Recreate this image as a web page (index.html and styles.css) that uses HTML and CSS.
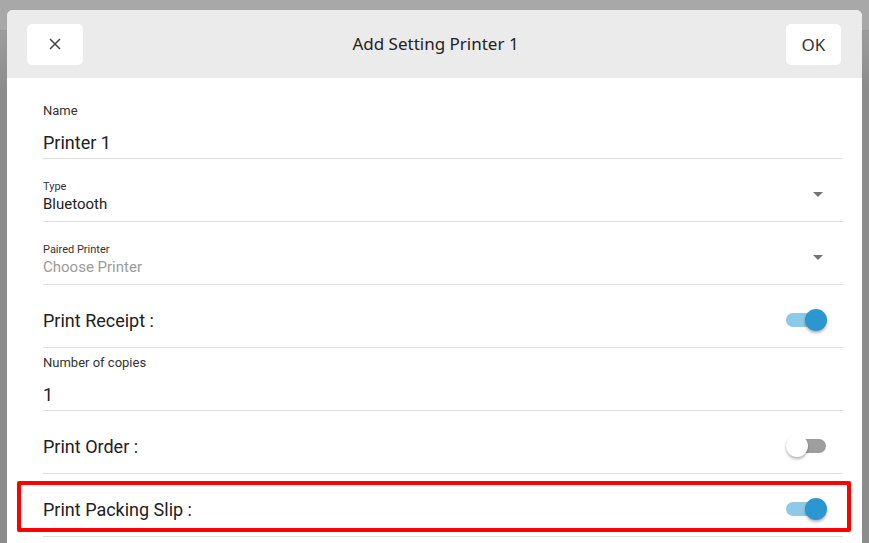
FILE: index.html
```html
<!DOCTYPE html>
<html lang="en">
<head>
  <meta charset="UTF-8" />
  <meta name="viewport" content="width=device-width, initial-scale=1.0" />
  <title>Add Setting Printer 1</title>
  <link rel="stylesheet" href="styles.css">
</head>
<body>
  <div class="modal">
    <header class="modal-head">
      <button class="head-btn close-btn" aria-label="Close">
        <svg width="14" height="14" viewBox="0 0 14 14"><path d="M2 2 L12 12 M12 2 L2 12" stroke="#444" stroke-width="1.5" fill="none"/></svg>
      </button>
      <h1 class="title">Add Setting Printer 1</h1>
      <button class="head-btn ok-btn">OK</button>
    </header>

    <div class="form">
      <div class="field field-name">
        <label>Name</label>
        <div class="value big">Printer 1</div>
      </div>

      <div class="field field-select">
        <div class="select-text">
          <label class="small">Type</label>
          <div class="value">Bluetooth</div>
        </div>
        <span class="arrow"></span>
      </div>

      <div class="field field-select">
        <div class="select-text">
          <label class="small">Paired Printer</label>
          <div class="value placeholder">Choose Printer</div>
        </div>
        <span class="arrow"></span>
      </div>

      <div class="field field-toggle">
        <span class="toggle-label">Print Receipt :</span>
        <span class="switch on"><span class="knob"></span></span>
      </div>

      <div class="field field-copies">
        <label>Number of copies</label>
        <div class="value big">1</div>
      </div>

      <div class="field field-toggle">
        <span class="toggle-label">Print Order :</span>
        <span class="switch"><span class="knob"></span></span>
      </div>

      <div class="field field-toggle marked">
        <span class="toggle-label">Print Packing Slip :</span>
        <span class="switch on"><span class="knob"></span></span>
        <span class="highlight"></span>
      </div>
    </div>
  </div>
</body>
</html>
```

FILE: styles.css
```css
*{
    padding: 0;
    margin: 0;
    box-sizing: border-box;
}
body{
    height: 543px;
    overflow: hidden;
    font-family: Roboto, "Liberation Sans", sans-serif;
    background: linear-gradient(to bottom, #a8a8a8 0, #a8a8a8 30px, #969696 30px, #969696 31px, #9c9c9c 31px, #8c8c8c 90px, #8c8c8c 100%);
}
.modal{
    margin: 10px 7px 0;
    background-color: white;
    border-radius: 6px 6px 0 0;
    height: 560px;
    overflow: hidden;
}
.modal-head{
    display: flex;
    align-items: center;
    justify-content: space-between;
    height: 68px;
    padding: 0 21px 0 20px;
    background-color: #ecebec;
}
.head-btn{
    height: 41px;
    border: none;
    border-radius: 5px;
    background-color: white;
    display: flex;
    align-items: center;
    justify-content: center;
    font-family: "Noto Sans", "Open Sans", sans-serif;
    font-size: 17px;
    color: #333;
}
.close-btn{
    width: 56px;
}
.ok-btn{
    width: 55px;
}
.title{
    font-family: "Noto Sans", "Open Sans", sans-serif;
    font-size: 17px;
    font-weight: 400;
    color: #222;
    margin: -2px 0 0 2px;
}
.form{
    padding: 0 19px 0 36px;
}
.field{
    border-bottom: 1px solid #e0e0e0;
    color: #212121;
}
.field label{
    display: block;
    font-size: 13px;
    line-height: 16px;
    color: #333;
}
.field label.small{
    font-size: 11px;
    line-height: 14px;
}
.value{
    font-size: 15px;
    line-height: 20px;
}
.value.big{
    font-size: 18px;
    line-height: 24px;
}
.placeholder{
    color: #9a9a9a;
}
.field-name{
    height: 81px;
    padding-top: 25px;
}
.field-name .value{
    margin-top: 12px;
}
.field-select{
    height: 63px;
    display: flex;
    align-items: center;
    justify-content: space-between;
    padding-top: 21px;
}
.select-text{
    align-self: flex-start;
}
.arrow{
    width: 0;
    height: 0;
    border-left: 5px solid transparent;
    border-right: 5px solid transparent;
    border-top: 5px solid #757575;
    margin: -13px 20px 0 0;
}
.field-toggle{
    height: 63px;
    display: flex;
    align-items: center;
    justify-content: space-between;
    padding-top: 8px;
    position: relative;
}
.toggle-label{
    font-size: 18px;
}
.switch{
    position: relative;
    width: 40px;
    height: 14px;
    border-radius: 7px;
    background-color: #9e9e9e;
    margin-right: 17px;
}
.switch .knob{
    position: absolute;
    top: -4px;
    left: 0;
    width: 22px;
    height: 22px;
    border-radius: 50%;
    background-color: white;
    box-shadow: 0 2px 3px rgba(0,0,0,0.3);
}
.switch.on{
    background-color: #8ec9e7;
}
.switch.on .knob{
    left: auto;
    right: -1px;
    background-color: #2b96cf;
}
.highlight{
    position: absolute;
    left: -26px;
    right: -8px;
    top: 7px;
    height: 51px;
    border: 4px solid #ff0000;
    border-radius: 2px;
    pointer-events: none;
}
.field-copies{
    height: 63px;
    padding-top: 7px;
}
.field-copies .value{
    margin-top: 12px;
}
```
